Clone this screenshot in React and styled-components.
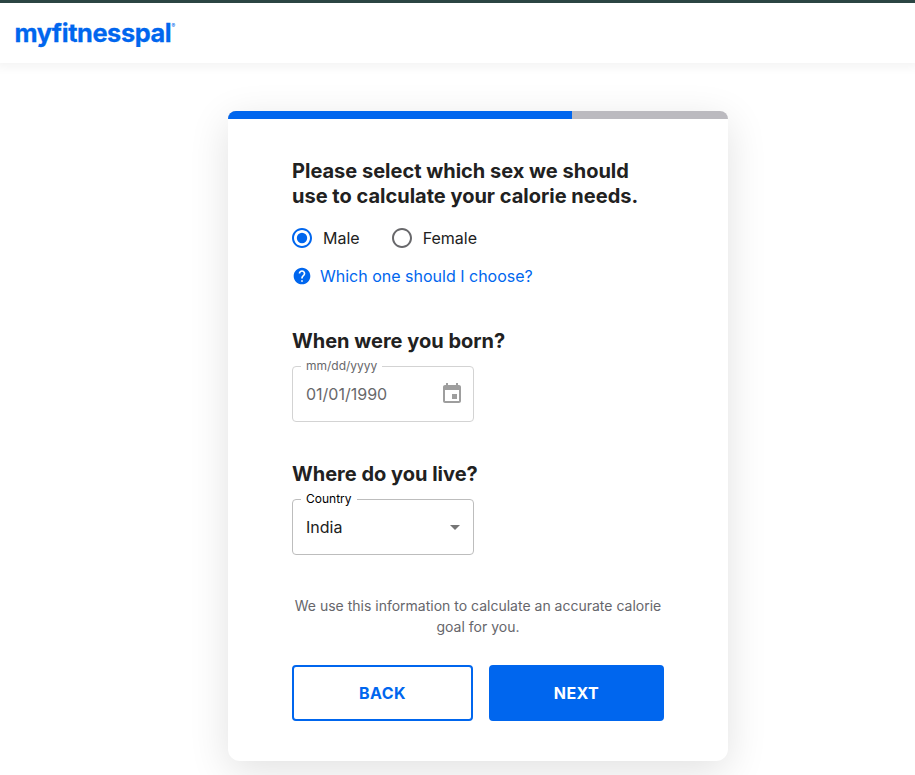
import React from 'react';
import styled, { createGlobalStyle } from 'styled-components';

const blue = '#0066ee';

const Global = createGlobalStyle`
  *, *::before, *::after { box-sizing: border-box; }
  html, body { margin: 0; height: 775px; overflow: hidden; }
  body { background: #fff; color: #212121; font-family: Inter, sans-serif; }
`;

const Page = styled.div`
  display: flex;
  flex-direction: column;
  height: 775px;
`;

const Header = styled.header`
  display: flex;
  align-items: flex-start;
  height: 63px;
  flex: none;
  padding: 16px 15px 0;
  border-top: 3px solid #2b4543;
  box-shadow: 0 0 10px 4px rgba(0, 0, 0, 0.05);
`;

const Logo = styled.svg`
  display: block;
  width: 162px;
  height: 32px;
  overflow: visible;
  fill: ${blue};
  font-family: Inter, sans-serif;
`;

const Card = styled.main`
  width: 500px;
  height: 650px;
  flex: none;
  margin: 48px 0 0 228px;
  border-radius: 8px 8px 12px 12px;
  background: #fff;
  box-shadow: 0 10px 40px rgba(0, 0, 0, 0.12);
`;

const Progress = styled.div`
  height: 8px;
  overflow: hidden;
  border-radius: 8px 8px 0 0;
  background: #bbbabf;
`;

const Bar = styled.div`
  width: 343.75px;
  height: 100%;
  background: ${blue};
`;

const Form = styled.form`
  display: flex;
  flex-direction: column;
  padding: 40px 64px 0;
`;

const Title = styled.h2`
  margin: 0;
  font-size: 20px;
  line-height: 25px;
  font-weight: 700;
  white-space: nowrap;
`;

const Section = styled.section`
  margin-top: ${(p) => p.$gap}px;
`;

const Radios = styled.div`
  display: flex;
  gap: 32px;
  height: 24px;
  margin-top: 17px;
`;

const RadioLabel = styled.label`
  display: flex;
  align-items: center;
  gap: 9px;
  margin-left: -2px;
  font-size: 16px;
  line-height: 24px;
`;

const Icon = styled.svg`
  display: block;
  flex: none;
  width: ${(p) => p.$size || 24}px;
  height: ${(p) => p.$size || 24}px;
  fill: ${(p) => p.$color};
`;

const Help = styled.a`
  display: flex;
  align-items: center;
  gap: 8px;
  height: 24px;
  margin-top: 14px;
  color: ${blue};
  font-size: 16px;
  text-decoration: none;
`;

const Field = styled.div`
  position: relative;
  display: flex;
  align-items: center;
  justify-content: space-between;
  width: 182px;
  height: 56px;
  margin-top: 12px;
  padding: 0 ${(p) => p.$right}px 0 13px;
  border: 1px solid ${(p) => p.$border};
  border-radius: 4px;
  color: ${(p) => p.$color};
  font-size: 16px;
`;

const FieldLabel = styled.span`
  position: absolute;
  top: -9px;
  left: 8px;
  padding: 0 5px;
  background: #fff;
  color: ${(p) => p.$color};
  font-size: 12px;
  line-height: 16px;
`;

const Note = styled.p`
  margin: 40px 0 0;
  color: #66666b;
  font-size: 14px;
  line-height: 21px;
  text-align: center;
`;

const Actions = styled.div`
  display: flex;
  gap: 16px;
  margin-top: 28px;
`;

const Button = styled.button`
  width: ${(p) => p.$width}px;
  height: 56px;
  padding: 0;
  border: 2px solid ${blue};
  border-radius: 4px;
  background: ${(p) => (p.$filled ? blue : '#fff')};
  color: ${(p) => (p.$filled ? '#fff' : blue)};
  font: 700 16px/24px Inter, sans-serif;
  letter-spacing: 0.4px;
`;

const ring = 'M12 2C6.48 2 2 6.48 2 12s4.48 10 10 10 10-4.48 10-10S17.52 2 12 2zm0 18c-4.42 0-8-3.58-8-8s3.58-8 8-8 8 3.58 8 8-3.58 8-8 8z';

function Radio({ checked, children }) {
  return (
    <RadioLabel>
      <Icon viewBox="0 0 24 24" $color={checked ? blue : '#68686b'}>
        <path d={ring} />
        {checked && <circle cx="12" cy="12" r="5.2" />}
      </Icon>
      {children}
    </RadioLabel>
  );
}

export default function App() {
  return (
    <Page>
      <Global />
      <Header>
        <Logo viewBox="0 0 162 32" role="img" aria-label="myfitnesspal">
          <text x="-0.6" y="23" fontSize="25.3" fontWeight="650" stroke={blue} strokeWidth="0.3" textLength="157.2" lengthAdjust="spacing">myfitnesspal</text>
          <text x="156.6" y="9" fontSize="5.5" fontWeight="600">®</text>
        </Logo>
      </Header>
      <Card>
        <Progress><Bar /></Progress>
        <Form>
          <Section $gap={0}>
            <Title>Please select which sex we should<br />use to calculate your calorie needs.</Title>
            <Radios>
              <Radio checked>Male</Radio>
              <Radio>Female</Radio>
            </Radios>
            <Help>
              <Icon viewBox="0 0 24 24" $size={20} $color={blue}>
                <path d="M12 2C6.48 2 2 6.48 2 12s4.48 10 10 10 10-4.48 10-10S17.52 2 12 2zm1 17h-2v-2h2v2zm2.07-7.75l-.9.92C13.45 12.9 13 13.5 13 15h-2v-.5c0-1.1.45-2.1 1.17-2.83l1.24-1.26c.37-.36.59-.86.59-1.41 0-1.1-.9-2-2-2s-2 .9-2 2H8c0-2.21 1.79-4 4-4s4 1.79 4 4c0 .88-.36 1.68-.93 2.25z" />
              </Icon>
              Which one should I choose?
            </Help>
          </Section>
          <Section $gap={41}>
            <Title>When were you born?</Title>
            <Field $right={9} $border="#d3d3d3" $color="#68686b">
              <FieldLabel $color="#68686b">mm/dd/yyyy</FieldLabel>
              01/01/1990
              <Icon viewBox="0 0 24 24" $color="#9e9e9e">
                <path d="M17 12h-5v5h5v-5zM16 1v2H8V1H6v2H5c-1.11 0-1.99.9-1.99 2L3 19c0 1.1.89 2 2 2h14c1.1 0 2-.9 2-2V5c0-1.1-.9-2-2-2h-1V1h-2zm3 18H5V8h14v11z" />
              </Icon>
            </Field>
          </Section>
          <Section $gap={40}>
            <Title>Where do you live?</Title>
            <Field $right={6} $border="#bdbdbd" $color="#212121">
              <FieldLabel $color="#000">Country</FieldLabel>
              India
              <Icon viewBox="0 0 24 24" $color="#757575"><path d="M7 10l5 5 5-5z" /></Icon>
            </Field>
          </Section>
          <Note>We use this information to calculate an accurate calorie<br />goal for you.</Note>
          <Actions>
            <Button type="button" $width={181}>BACK</Button>
            <Button type="button" $width={175} $filled>NEXT</Button>
          </Actions>
        </Form>
      </Card>
    </Page>
  );
}
